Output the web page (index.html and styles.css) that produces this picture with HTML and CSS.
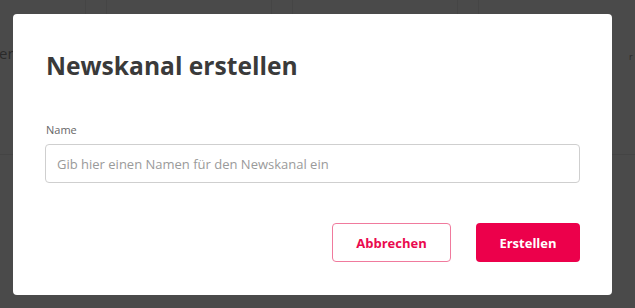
FILE: index.html
```html
<!DOCTYPE html>
<html lang="de">
<head>
<meta charset="utf-8">
<title>Newskanal erstellen</title>
<link rel="stylesheet" href="styles.css">
</head>
<body>
<div class="page">
  <div class="toolbar">
    <div class="cell c1"><span class="ghost">er</span></div>
    <div class="cell c2"></div>
    <div class="cell c3"></div>
    <div class="cell c2"></div>
    <div class="cell c3"></div>
    <div class="cell c2"></div>
    <div class="cell c4"><span class="ghost dot">r</span></div>
  </div>
</div>
<div class="modal" role="dialog">
  <h1 class="title">Newskanal erstellen</h1>
  <label class="label" for="name">Name</label>
  <input class="input" id="name" type="text" placeholder="Gib hier einen Namen für den Newskanal ein">
  <div class="actions">
    <button class="btn btn-outline">Abbrechen</button>
    <button class="btn btn-primary">Erstellen</button>
  </div>
</div>
</body>
</html>
```
FILE: styles.css
```css
* { box-sizing: border-box; }
html, body { margin: 0; padding: 0; }
body {
  width: 635px;
  height: 308px;
  overflow: hidden;
  background: #4a4a4a;
  font-family: "Open Sans", "Liberation Sans", sans-serif;
  position: relative;
}
.page { height: 308px; }
.toolbar {
  display: flex;
  height: 155px;
  border-bottom: 1px solid #444;
}
.cell {
  border-right: 1px solid #454545;
  display: flex;
  align-items: flex-start;
  overflow: hidden;
}
.c1 { width: 86px; }
.c2 { width: 21px; background: #4a4a4a; }
.c3 { width: 165px; }
.c4 { flex: 1; border-right: 0; }
.ghost {
  color: #2a2a2a;
  font-size: 15px;
  margin-top: 43px;
  margin-left: -1px;
  white-space: nowrap;
}
.dot { margin-left: 150px; font-size: 9px; margin-top: 50px; }

.modal {
  position: absolute;
  left: 13px;
  top: 14px;
  width: 599px;
  height: 281px;
  background: #fff;
  border-radius: 4px;
  padding: 36px 32px 33px 32px;
  display: flex;
  flex-direction: column;
}
.title {
  margin: 0 0 40px 1px;
  font-size: 24.6px;
  line-height: 32px;
  font-weight: 700;
  color: #3a3a3a;
}
.label {
  font-size: 11px;
  line-height: 15px;
  color: #666;
  margin-left: 1px;
  margin-bottom: 7px;
}
.input {
  height: 39px;
  width: 100%;
  border: 1px solid #cfcfcf;
  border-radius: 4px;
  padding: 0 11px;
  font-family: inherit;
  font-size: 13px;
  color: #333;
  outline: none;
}
.input::placeholder { color: #9a9a9a; }
.actions {
  display: flex;
  justify-content: flex-end;
  gap: 25px;
  margin-top: 40px;
}
.btn {
  height: 39px;
  border-radius: 4px;
  font-family: inherit;
  font-size: 13px;
  font-weight: 700;
  cursor: pointer;
}
.btn-outline {
  width: 119px;
  background: #fff;
  color: #ea0a4e;
  border: 1px solid #f07a9d;
}
.btn-primary {
  width: 104px;
  background: #ec004b;
  color: #fff;
  border: 0;
}
```
